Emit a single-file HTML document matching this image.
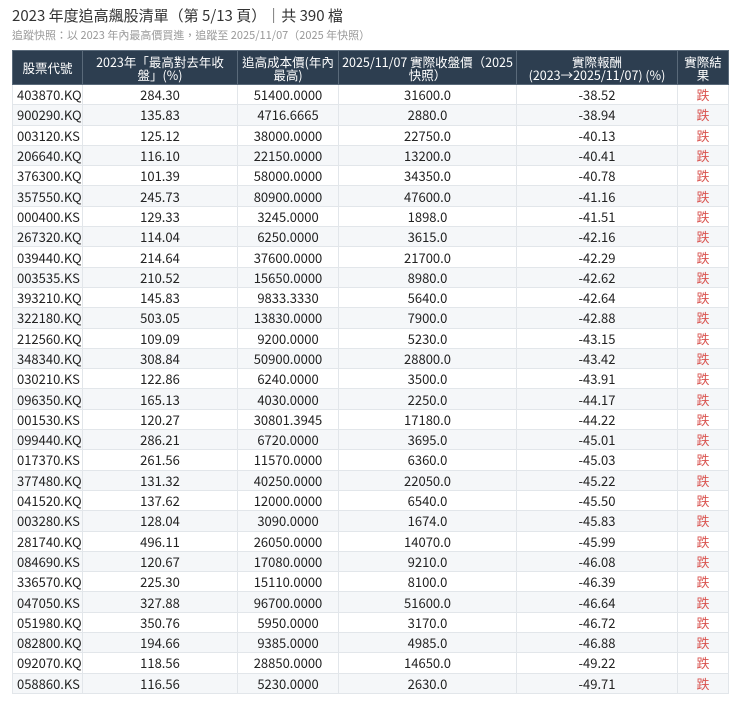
<!DOCTYPE html>
<html><head><meta charset="utf-8"><style>
body{margin:0;background:#fff;font-family:"Noto Sans CJK TC","Liberation Sans",sans-serif;color:#222;}
.t{position:absolute;left:12px;top:6px;font-size:15px;line-height:20px;color:#333;}
.s{position:absolute;left:12px;top:28px;font-size:11px;line-height:15px;color:#999;}
table{position:absolute;left:12px;top:50px;border-collapse:collapse;width:716px;table-layout:fixed;font-size:13px;}
th{background:#2d3e50;color:#fff;font-weight:normal;font-size:12.5px;line-height:13px;height:33px;padding:0 3px;border:1px solid #5a6a7a;text-align:center;}
td{height:19.3px;padding:0 4px;border:1px solid #e2e6ea;text-align:center;line-height:15px;}
td:first-child{text-align:left;}
tr:nth-child(even) td{background:#f5f7f9;}
td.r{color:#d9534f;}
</style></head><body>
<div class="t">2023 年度追高飆股清單（第 5/13 頁）｜共 390 檔</div>
<div class="s">追蹤快照：以 2023 年內最高價買進，追蹤至 2025/11/07（2025 年快照）</div>
<table>
<colgroup><col style="width:70px"><col style="width:155px"><col style="width:101px"><col style="width:178px"><col style="width:161px"><col style="width:51px"></colgroup>
<thead><tr><th>股票代號</th><th>2023年「最高對去年收<br>盤」(%)</th><th>追高成本價(年內<br>最高)</th><th>2025/11/07 實際收盤價（2025<br>快照）</th><th>實際報酬<br>(2023→2025/11/07) (%)</th><th>實際結<br>果</th></tr></thead>
<tbody>
<tr><td>403870.KQ</td><td>284.30</td><td>51400.0000</td><td>31600.0</td><td>-38.52</td><td class="r">跌</td></tr>
<tr><td>900290.KQ</td><td>135.83</td><td>4716.6665</td><td>2880.0</td><td>-38.94</td><td class="r">跌</td></tr>
<tr><td>003120.KS</td><td>125.12</td><td>38000.0000</td><td>22750.0</td><td>-40.13</td><td class="r">跌</td></tr>
<tr><td>206640.KQ</td><td>116.10</td><td>22150.0000</td><td>13200.0</td><td>-40.41</td><td class="r">跌</td></tr>
<tr><td>376300.KQ</td><td>101.39</td><td>58000.0000</td><td>34350.0</td><td>-40.78</td><td class="r">跌</td></tr>
<tr><td>357550.KQ</td><td>245.73</td><td>80900.0000</td><td>47600.0</td><td>-41.16</td><td class="r">跌</td></tr>
<tr><td>000400.KS</td><td>129.33</td><td>3245.0000</td><td>1898.0</td><td>-41.51</td><td class="r">跌</td></tr>
<tr><td>267320.KQ</td><td>114.04</td><td>6250.0000</td><td>3615.0</td><td>-42.16</td><td class="r">跌</td></tr>
<tr><td>039440.KQ</td><td>214.64</td><td>37600.0000</td><td>21700.0</td><td>-42.29</td><td class="r">跌</td></tr>
<tr><td>003535.KS</td><td>210.52</td><td>15650.0000</td><td>8980.0</td><td>-42.62</td><td class="r">跌</td></tr>
<tr><td>393210.KQ</td><td>145.83</td><td>9833.3330</td><td>5640.0</td><td>-42.64</td><td class="r">跌</td></tr>
<tr><td>322180.KQ</td><td>503.05</td><td>13830.0000</td><td>7900.0</td><td>-42.88</td><td class="r">跌</td></tr>
<tr><td>212560.KQ</td><td>109.09</td><td>9200.0000</td><td>5230.0</td><td>-43.15</td><td class="r">跌</td></tr>
<tr><td>348340.KQ</td><td>308.84</td><td>50900.0000</td><td>28800.0</td><td>-43.42</td><td class="r">跌</td></tr>
<tr><td>030210.KS</td><td>122.86</td><td>6240.0000</td><td>3500.0</td><td>-43.91</td><td class="r">跌</td></tr>
<tr><td>096350.KQ</td><td>165.13</td><td>4030.0000</td><td>2250.0</td><td>-44.17</td><td class="r">跌</td></tr>
<tr><td>001530.KS</td><td>120.27</td><td>30801.3945</td><td>17180.0</td><td>-44.22</td><td class="r">跌</td></tr>
<tr><td>099440.KQ</td><td>286.21</td><td>6720.0000</td><td>3695.0</td><td>-45.01</td><td class="r">跌</td></tr>
<tr><td>017370.KS</td><td>261.56</td><td>11570.0000</td><td>6360.0</td><td>-45.03</td><td class="r">跌</td></tr>
<tr><td>377480.KQ</td><td>131.32</td><td>40250.0000</td><td>22050.0</td><td>-45.22</td><td class="r">跌</td></tr>
<tr><td>041520.KQ</td><td>137.62</td><td>12000.0000</td><td>6540.0</td><td>-45.50</td><td class="r">跌</td></tr>
<tr><td>003280.KS</td><td>128.04</td><td>3090.0000</td><td>1674.0</td><td>-45.83</td><td class="r">跌</td></tr>
<tr><td>281740.KQ</td><td>496.11</td><td>26050.0000</td><td>14070.0</td><td>-45.99</td><td class="r">跌</td></tr>
<tr><td>084690.KS</td><td>120.67</td><td>17080.0000</td><td>9210.0</td><td>-46.08</td><td class="r">跌</td></tr>
<tr><td>336570.KQ</td><td>225.30</td><td>15110.0000</td><td>8100.0</td><td>-46.39</td><td class="r">跌</td></tr>
<tr><td>047050.KS</td><td>327.88</td><td>96700.0000</td><td>51600.0</td><td>-46.64</td><td class="r">跌</td></tr>
<tr><td>051980.KQ</td><td>350.76</td><td>5950.0000</td><td>3170.0</td><td>-46.72</td><td class="r">跌</td></tr>
<tr><td>082800.KQ</td><td>194.66</td><td>9385.0000</td><td>4985.0</td><td>-46.88</td><td class="r">跌</td></tr>
<tr><td>092070.KQ</td><td>118.56</td><td>28850.0000</td><td>14650.0</td><td>-49.22</td><td class="r">跌</td></tr>
<tr><td>058860.KS</td><td>116.56</td><td>5230.0000</td><td>2630.0</td><td>-49.71</td><td class="r">跌</td></tr>
</tbody></table>
</body></html>
